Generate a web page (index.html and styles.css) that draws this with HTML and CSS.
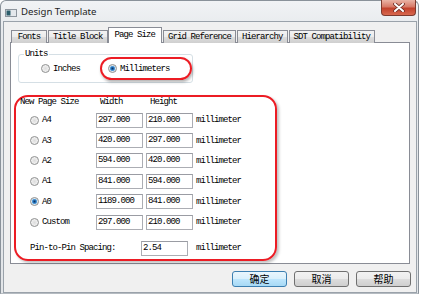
FILE: index.html
```html
<!DOCTYPE html>
<html lang="en">
<head>
    <meta charset="UTF-8">
    <title>Design Template</title>
    <link rel="stylesheet" href="styles.css">
</head>
<body>

    <div class="window">
        <!-- Title bar -->
        <div class="titlebar">
            <svg class="app-icon" width="12" height="8" viewBox="0 0 12 8">
                <rect x="0.5" y="0.5" width="11" height="7" fill="#e4e8ec" stroke="#8d959d"/>
                <rect x="1.5" y="1.5" width="4" height="5" fill="#2c5e6c"/>
            </svg>
            <span class="title">Design Template</span>
            <div class="close-btn">
                <svg width="12" height="9" viewBox="0 0 12 9">
                    <path d="M2 1 L10 8 M10 1 L2 8" stroke="#6b2a22" stroke-width="3.6" stroke-linecap="round"/>
                    <path d="M2 1 L10 8 M10 1 L2 8" stroke="#ffffff" stroke-width="2" stroke-linecap="round"/>
                </svg>
            </div>
        </div>

        <div class="client">
            <!-- Tabs -->
            <div class="tabs">
                <div class="tab tab-fonts">Fonts</div>
                <div class="tab">Title Block</div>
                <div class="tab active">Page Size</div>
                <div class="tab">Grid Reference</div>
                <div class="tab">Hierarchy</div>
                <div class="tab">SDT Compatibility</div>
            </div>

            <div class="panel">
                <!-- Units -->
                <fieldset class="units">
                    <legend>Units</legend>
                    <div class="units-row">
                        <label class="option"><span class="radio"></span>Inches</label>
                        <label class="option highlight-pill"><span class="radio on"></span>Millimeters</label>
                    </div>
                </fieldset>

                <!-- Page sizes -->
                <div class="highlight-box">
                    <div class="size-grid size-head">
                        <span class="head-first">New Page Size</span>
                        <span class="head-col">Width</span>
                        <span class="head-col">Height</span>
                        <span></span>
                    </div>
                    <div class="size-grid size-rows">
                        <label class="option row-first"><span class="radio"></span>A4</label>
                        <div class="field">297.000</div>
                        <div class="field">210.000</div>
                        <span class="unit">millimeter</span>

                        <label class="option row-first"><span class="radio"></span>A3</label>
                        <div class="field">420.000</div>
                        <div class="field">297.000</div>
                        <span class="unit">millimeter</span>

                        <label class="option row-first"><span class="radio"></span>A2</label>
                        <div class="field">594.000</div>
                        <div class="field">420.000</div>
                        <span class="unit">millimeter</span>

                        <label class="option row-first"><span class="radio"></span>A1</label>
                        <div class="field">841.000</div>
                        <div class="field">594.000</div>
                        <span class="unit">millimeter</span>

                        <label class="option row-first"><span class="radio on"></span>A0</label>
                        <div class="field">1189.000</div>
                        <div class="field">841.000</div>
                        <span class="unit">millimeter</span>

                        <label class="option row-first"><span class="radio"></span>Custom</label>
                        <div class="field">297.000</div>
                        <div class="field">210.000</div>
                        <span class="unit">millimeter</span>
                    </div>

                    <div class="pin-row">
                        <span class="pin-label">Pin-to-Pin Spacing:</span>
                        <div class="field">2.54</div>
                        <span class="unit">millimeter</span>
                    </div>
                </div>
            </div>

            <!-- Dialog buttons -->
            <div class="buttons">
                <button class="btn default">确定</button>
                <button class="btn">取消</button>
                <button class="btn">帮助</button>
            </div>
        </div>
    </div>

</body>
</html>
```

FILE: styles.css
```css
body {
    margin: 0;
    width: 422px;
    height: 298px;
    overflow: hidden;
    background-color: #ffffff;
    font-family: "Liberation Mono", monospace;
    font-size: 9px;
    letter-spacing: -0.9px;
    color: #000;
}

/* Window frame */
.window {
    box-sizing: border-box;
    width: 419px;
    height: 294px;
    padding: 0 1px 1px 2px;
    border: 1px solid #8a929a;
    border-bottom-color: #b5bbc1;
    border-radius: 6px 6px 0 0;
    background: linear-gradient(#f1f3f5, #e6e9ec 30px, #e2e5e8);
}

.titlebar {
    display: flex;
    align-items: flex-start;
    height: 20px;
}

.app-icon {
    margin: 8px 0 0 2px;
}

.title {
    margin: 4px 0 0 4px;
    font-family: "Noto Sans", sans-serif;
    font-size: 9.6px;
    letter-spacing: 0;
    color: #1e1e1e;
}

.close-btn {
    box-sizing: border-box;
    display: flex;
    align-items: center;
    justify-content: center;
    width: 35px;
    height: 16px;
    margin: -1px 1px 0 auto;
    border: 1px solid #7d3a2e;
    border-top: none;
    border-radius: 0 0 4px 4px;
    background: linear-gradient(#eab4a6, #d77967 45%, #c2412c 55%, #d8694f);
}

/* Client area */
.client {
    box-sizing: border-box;
    height: 272px;
    padding: 5px 0 0 6px;
    border: 1px solid #9aa2aa;
    background-color: #f0f0f0;
}

.tabs {
    display: flex;
    align-items: flex-end;
    gap: 1px;
    height: 16px;
    padding-left: 1px;
    margin-bottom: -1px;
    position: relative;
}

.tab {
    box-sizing: border-box;
    height: 13px;
    padding: 0 4px;
    line-height: 12px;
    text-align: center;
    border: 1px solid #898c95;
    border-bottom: none;
    background: linear-gradient(#f3f3f3, #ebebeb 50%, #dddddd 50%, #cfcfcf);
}

.tab-fonts {
    min-width: 36px;
}

.tab.active {
    height: 16px;
    margin: 0 0 0 -1px;
    padding: 0 6px;
    line-height: 14px;
    background: #ffffff;
}

.panel {
    box-sizing: border-box;
    width: 400px;
    height: 222px;
    padding: 0;
    border: 1px solid #898c95;
    background-color: #ffffff;
}

/* Units group */
.units {
    box-sizing: border-box;
    width: 175px;
    margin: 8px 0 0 7px;
    padding: 0 0 2px 0;
    border: 1px solid #d5dfe5;
    border-radius: 3px;
}

.units legend {
    margin-left: 5px;
    padding: 0 1px;
    line-height: 6px;
}

.units-row {
    display: flex;
    align-items: center;
    padding-left: 22px;
}

.option {
    display: flex;
    align-items: center;
    gap: 3px;
}

.radio {
    box-sizing: border-box;
    width: 9px;
    height: 9px;
    border: 1px solid #8e8f8f;
    border-radius: 50%;
    background: radial-gradient(circle, #dcdcdc 0, #e8e8e8 2px, #f6f6f6 4px);
    flex-shrink: 0;
}

.radio.on {
    background: radial-gradient(circle, #0b3566 0, #1f64a8 1.2px, #63ace6 2.4px, #dfe6ec 3px, #f4f4f4 4px);
}

.highlight-pill {
    box-sizing: border-box;
    width: 92px;
    height: 23px;
    margin-left: 20px;
    padding-left: 6px;
    border: 2px solid #ec1c24;
    border-radius: 12px;
    box-shadow: 1px 2px 3px rgba(0, 0, 0, 0.3);
}

/* New page size group */
.highlight-box {
    box-sizing: border-box;
    width: 263px;
    height: 166px;
    margin: 12px 0 0 3px;
    padding: 0;
    border: 2px solid #ec1c24;
    border-radius: 14px;
    box-shadow: 2px 2px 3px rgba(0, 0, 0, 0.25);
}

.size-grid {
    display: grid;
    grid-template-columns: 77px 47px 47px 46px;
    column-gap: 3px;
}

.size-head {
    height: 10px;
    line-height: 10px;
    margin-bottom: 3px;
}

.head-first {
    padding-left: 4px;
}

.head-col {
    padding-left: 4px;
}

.size-rows {
    grid-auto-rows: 20.4px;
    align-items: center;
}

.row-first {
    padding-left: 14px;
}

.field {
    box-sizing: border-box;
    height: 15px;
    padding-left: 1px;
    line-height: 13px;
    border: 1px solid #abadb3;
    border-top-color: #9a9ca3;
    background-color: #ffffff;
    white-space: nowrap;
    overflow: hidden;
}

.unit {
    white-space: nowrap;
}

.pin-row {
    display: flex;
    align-items: center;
    height: 20px;
    margin-top: 6px;
    padding-left: 14px;
}

.pin-label {
    width: 111px;
}

.pin-row .field {
    width: 47px;
    margin-right: 8px;
}

/* Buttons */
.buttons {
    display: flex;
    justify-content: flex-end;
    gap: 7px;
    margin-top: 7px;
    padding-right: 5px;
}

.btn {
    box-sizing: border-box;
    width: 55px;
    height: 16px;
    padding: 0;
    font-family: "Noto Sans CJK SC", sans-serif;
    font-size: 10px;
    letter-spacing: 0;
    line-height: 14px;
    color: #000;
    border: 1px solid #707070;
    border-radius: 3px;
    background: linear-gradient(#f2f2f2, #ebebeb 50%, #dddddd 50%, #cfcfcf);
}

.btn.default {
    border-color: #3c7fb1;
    background: linear-gradient(#eaf6fd, #d9f0fc 50%, #bee6fd 50%, #a7d9f5);
}
```
